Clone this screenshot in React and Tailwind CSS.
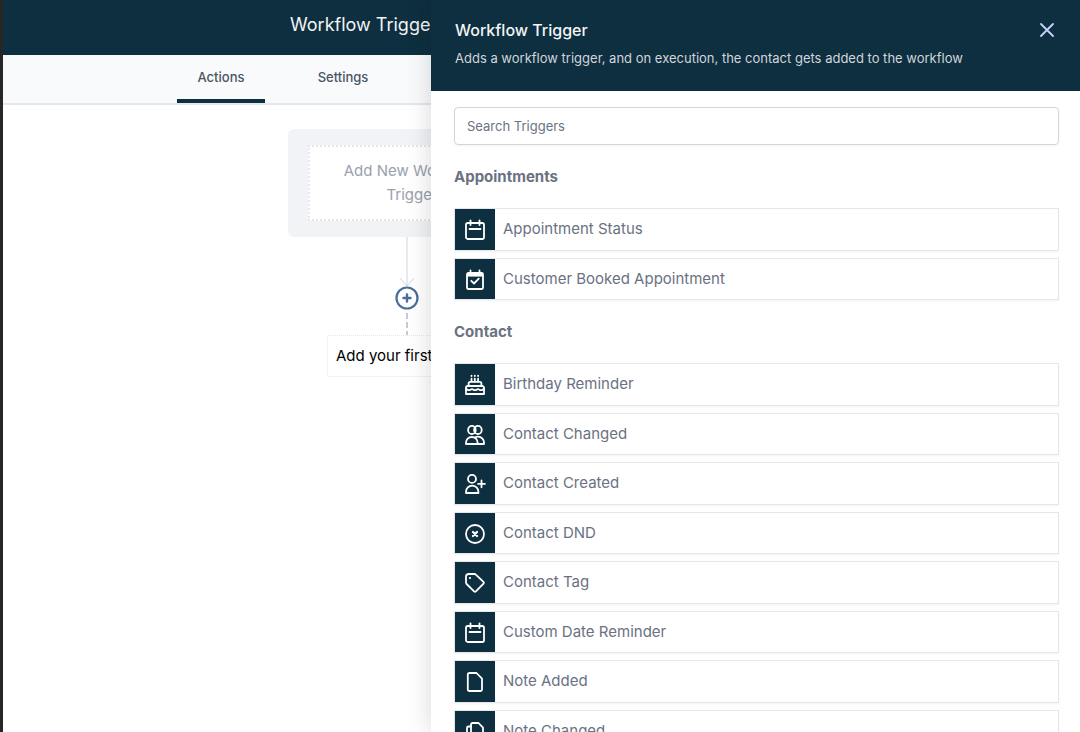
import React from "react";

const icons = {
  calendar: (
    <>
      <rect x="1" y="3" width="18" height="16" rx="1.8" />
      <path d="M5.5 0.3V5M14.5 0.3V5M4.5 9h11" />
    </>
  ),
  calendarCheck: (
    <>
      <rect x="2" y="3" width="16" height="16" rx="1.4" />
      <path d="M2 3h16v3.6H2z" fill="currentColor" stroke="none" />
      <path d="M5.5 0.5V4M14.5 0.5V4" />
      <path d="M6.3 10.8l2.7 2.7 4.8-4.8" />
    </>
  ),
  cake: (
    <>
      <path d="M6.5 0.6v.4M9.8 0.6v.4M13.1 0.6v.4M6.5 3.6v2.6M9.8 3.6v2.6M13.1 3.6v2.6" />
      <path d="M3.6 11V8.4a1.6 1.6 0 0 1 1.6-1.6h9.6a1.6 1.6 0 0 1 1.6 1.6V11" />
      <path d="M1 19v-6.2A1.8 1.8 0 0 1 2.8 11h14.4a1.8 1.8 0 0 1 1.8 1.8V19z" />
      <path d="M1 14.2c1.5 0 1.5 1 3 1s1.5-1 3-1 1.5 1 3 1 1.5-1 3-1 1.5 1 3 1 1.5-1 3-1" />
    </>
  ),
  people: (
    <>
      <ellipse cx="6.9" cy="4.9" rx="3.8" ry="4.1" />
      <ellipse cx="12.9" cy="4.9" rx="3.8" ry="4.1" />
      <path d="M1 19v-1.2a5.8 5.8 0 0 1 11.6 0V19zM9.8 12.6c1-.6 2-.9 3.2-.9a6 6 0 0 1 6 6.1V19h-6.4" />
    </>
  ),
  personPlus: (
    <>
      <circle cx="7" cy="4.9" r="4" />
      <path d="M1 19v-1.2a6 6 0 0 1 12.4 0V19zM16.5 6.5v6.8M13.1 9.9h6.8" />
    </>
  ),
  circleX: (
    <>
      <circle cx="10" cy="10" r="9" />
      <path d="M8 8l4 4M12 8l-4 4" strokeWidth="2.2" />
    </>
  ),
  tag: (
    <>
      <path d="M1 9.6V3.8A2.8 2.8 0 0 1 3.8 1h5.6a2 2 0 0 1 1.4.6l7.7 7.3a1.3 1.3 0 0 1 0 1.8l-7.6 7.7a1.3 1.3 0 0 1-1.8 0L1.6 11A2 2 0 0 1 1 9.6z" />
      <circle cx="5" cy="5" r="1.1" fill="currentColor" stroke="none" />
    </>
  ),
  note: (
    <path d="M4.3 1h7.2L17 6.7v10.8a1.5 1.5 0 0 1-1.5 1.5H4.3a1.5 1.5 0 0 1-1.5-1.5v-15A1.5 1.5 0 0 1 4.3 1z" />
  ),
  notes: (
    <>
      <path d="M7.5 1h6L18 5.7V14a1.5 1.5 0 0 1-1.5 1.5h-9A1.5 1.5 0 0 1 6 14V2.5A1.5 1.5 0 0 1 7.5 1z" />
      <path d="M6 4.5H3.5A1.5 1.5 0 0 0 2 6v11.5A1.5 1.5 0 0 0 3.5 19h9a1.5 1.5 0 0 0 1.5-1.5v-2" />
    </>
  ),
};

const groups = [
  {
    title: "Appointments",
    items: [
      ["calendar", "Appointment Status"],
      ["calendarCheck", "Customer Booked Appointment"],
    ],
  },
  {
    title: "Contact",
    items: [
      ["cake", "Birthday Reminder"],
      ["people", "Contact Changed"],
      ["personPlus", "Contact Created"],
      ["circleX", "Contact DND"],
      ["tag", "Contact Tag"],
      ["calendar", "Custom Date Reminder"],
      ["note", "Note Added"],
      ["notes", "Note Changed"],
    ],
  },
];

function TriggerRow({ icon, label }) {
  return (
    <button
      type="button"
      className="flex w-full items-stretch border border-gray-200 bg-white text-left shadow-xs"
    >
      <span className="flex w-10 shrink-0 items-center justify-center bg-[#0e2f3f] pt-0.5 text-white">
        <svg
          viewBox="0 0 20 20"
          className="size-5 overflow-visible"
          fill="none"
          stroke="currentColor"
          strokeWidth="1.8"
          strokeLinecap="round"
          strokeLinejoin="round"
          aria-hidden="true"
        >
          {icons[icon]}
        </svg>
      </span>
      <span className="px-2 py-[9px] text-[15px] leading-normal text-gray-500">{label}</span>
    </button>
  );
}

function Builder() {
  return (
    <div className="w-[431px] shrink-0 overflow-hidden border-l-3 border-[#262626] bg-white">
      <header className="flex h-[55px] items-center bg-[#0e2f3f] pb-1.5 pl-[287px]">
        <h1 className="text-lg whitespace-nowrap text-gray-100">Workflow Trigger</h1>
      </header>
      <nav className="flex h-[50px] border-b-2 border-gray-200 bg-[#f9fafb] pl-[174px] text-[13px] leading-5 font-medium text-gray-600">
        <a href="#actions" className="flex w-[88px] justify-center border-b-4 border-[#0e2f3f] pt-3">
          Actions
        </a>
        <a href="#settings" className="ml-[34px] flex w-[88px] justify-center pt-3">
          Settings
        </a>
      </nav>
      <main className="flex w-[808px] flex-col items-center pt-6">
        <div className="w-[238px] rounded-md bg-[#f2f3f7] px-5 py-4">
          <button
            type="button"
            className="w-full border-2 border-dotted border-gray-200 bg-white py-3 pr-5 pl-[30px] text-[15px] leading-6 text-gray-400"
          >
            Add New Workflow Trigger
          </button>
        </div>
        <svg width="24" height="98" viewBox="0 1 24 98" fill="none" aria-hidden="true">
          <path d="M12 0V50M5 42l7 8 7-8" stroke="#d1d5db" />
          <circle cx="12" cy="62" r="10.5" stroke="#4a6d99" strokeWidth="2.2" />
          <path d="M12 58.5v7M8.5 62h7" stroke="#4a6d99" strokeWidth="2.4" strokeLinecap="round" />
          <path d="M12 77v23" stroke="#c5cad3" strokeWidth="2" strokeDasharray="6 3" />
        </svg>
        <button
          type="button"
          className="w-[160px] rounded-xs border border-dotted border-gray-200 bg-white px-2 py-2 text-left text-[15px] leading-6 whitespace-nowrap text-black"
        >
          Add your first Action
        </button>
      </main>
    </div>
  );
}

export default function App() {
  return (
    <div className="flex h-screen overflow-hidden bg-white font-['Inter',sans-serif]">
      <Builder />
      <aside className="relative min-w-0 flex-1 overflow-hidden bg-white shadow-[0_0_24px_rgba(0,0,0,0.16)]">
        <header className="flex items-start justify-between bg-[#0e2f3f] px-6 pt-[18px] pb-[23px]">
          <div>
            <h2 className="text-base leading-6 font-medium text-gray-100">Workflow Trigger</h2>
            <p className="mt-1.5 text-[13px] leading-5 text-gray-300">
              Adds a workflow trigger, and on execution, the contact gets added to the workflow
            </p>
          </div>
          <button type="button" aria-label="Close" className="text-indigo-200">
            <svg width="18" height="24" viewBox="0 0 18 24" fill="none" aria-hidden="true">
              <path d="M3 6l12 12M15 6L3 18" stroke="currentColor" strokeWidth="1.8" strokeLinecap="round" />
            </svg>
          </button>
        </header>
        <div className="pt-4 pr-[21px] pl-[23px]">
          <input
            type="search"
            aria-label="Search Triggers"
            placeholder="Search Triggers"
            className="block h-[38px] w-full rounded-sm border border-gray-300 px-3 text-[13px] text-gray-700 shadow-xs placeholder:text-gray-500"
          />
          {groups.map((group) => (
            <section key={group.title} className="pt-5">
              <h3 className="text-[15px] leading-6 font-bold text-gray-500">{group.title}</h3>
              <div className="mt-[19px] flex flex-col gap-[7px]">
                {group.items.map(([icon, label]) => (
                  <TriggerRow key={label} icon={icon} label={label} />
                ))}
              </div>
            </section>
          ))}
        </div>
      </aside>
    </div>
  );
}
